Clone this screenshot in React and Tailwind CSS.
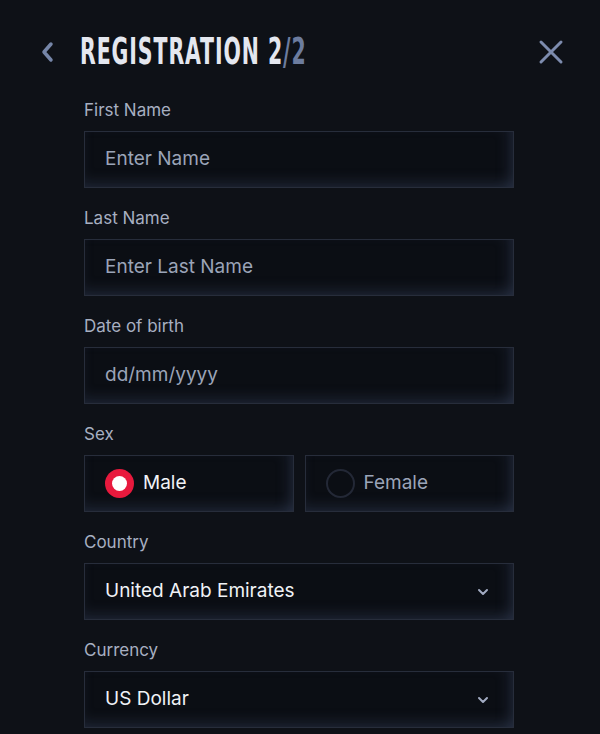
import React, { useState } from 'react';

const fieldBox =
  'h-[57px] w-full flex items-center px-5 bg-[#0b0e14] border border-[#272d3b] shadow-[inset_0_-10px_14px_-6px_rgba(70,82,115,0.35),inset_-12px_0_14px_-8px_rgba(70,82,115,0.3)]';

function Label({ children }) {
  return <div className="text-[17px] leading-[22px] text-[#a7afc1]">{children}</div>;
}

function TextField({ label, placeholder }) {
  return (
    <div className="flex flex-col gap-[10px]">
      <Label>{label}</Label>
      <div className={fieldBox}>
        <span className="text-[19px] text-[#9ba4b8]">{placeholder}</span>
      </div>
    </div>
  );
}

function SelectField({ label, value }) {
  return (
    <div className="flex flex-col gap-[10px]">
      <Label>{label}</Label>
      <div className={fieldBox + ' justify-between'}>
        <span className="text-[19px] text-[#f0f2f6]">{value}</span>
        <svg width="12" height="8" viewBox="0 0 12 8" className="mr-[4px]" fill="none" stroke="#a2abc2" strokeWidth="2" strokeLinecap="round" strokeLinejoin="round">
          <path d="M2 2l4 4 4-4" />
        </svg>
      </div>
    </div>
  );
}

function Radio({ label, checked, onClick }) {
  return (
    <button onClick={onClick} className={fieldBox + ' gap-[9px] flex-1'}>
      {checked ? (
        <span className="w-[29px] h-[29px] rounded-full bg-[#e8193d] flex items-center justify-center">
          <span className="w-[15px] h-[15px] rounded-full bg-white" />
        </span>
      ) : (
        <span className="w-[29px] h-[29px] rounded-full border-2 border-[#232836] bg-[#0b0e14]" />
      )}
      <span className={'text-[19px] ' + (checked ? 'text-[#f0f2f6]' : 'text-[#9ba4b8]')}>{label}</span>
    </button>
  );
}

export default function App() {
  const [sex, setSex] = useState('male');

  return (
    <div className="w-[600px] h-[734px] overflow-hidden bg-[#0e1117] font-['Inter','Liberation_Sans',sans-serif]">
      {/* Header */}
      <div className="h-[99px] flex items-center pl-[40px] pr-[36px] pt-[4px]">
        <svg width="16" height="22" viewBox="0 0 16 22" fill="none" stroke="#7686a8" strokeWidth="3.5" strokeLinecap="round" strokeLinejoin="round">
          <path d="M11 3L4 11l7 8" />
        </svg>
        <h1 className="ml-[24px] whitespace-nowrap text-[37px] font-bold leading-none tracking-[1.5px] text-[#e4e7ef] font-['DejaVu_Sans_Condensed','Liberation_Sans_Narrow',sans-serif] [font-stretch:condensed] scale-x-[0.615] origin-left">
          REGISTRATION 2<span className="text-[#6c7c9e]">/2</span>
        </h1>
        <svg className="ml-auto" width="26" height="26" viewBox="0 0 26 26" fill="none" stroke="#7d8cae" strokeWidth="3" strokeLinecap="round">
          <path d="M3 3l20 20M23 3L3 23" />
        </svg>
      </div>

      {/* Form */}
      <div className="w-[430px] ml-[84px] flex flex-col gap-[19px]">
        <TextField label="First Name" placeholder="Enter Name" />
        <TextField label="Last Name" placeholder="Enter Last Name" />
        <TextField label="Date of birth" placeholder="dd/mm/yyyy" />
        <div className="flex flex-col gap-[10px]">
          <Label>Sex</Label>
          <div className="flex gap-[11px]">
            <Radio label="Male" checked={sex === 'male'} onClick={() => setSex('male')} />
            <Radio label="Female" checked={sex === 'female'} onClick={() => setSex('female')} />
          </div>
        </div>
        <SelectField label="Country" value="United Arab Emirates" />
        <SelectField label="Currency" value="US Dollar" />
      </div>
    </div>
  );
}
